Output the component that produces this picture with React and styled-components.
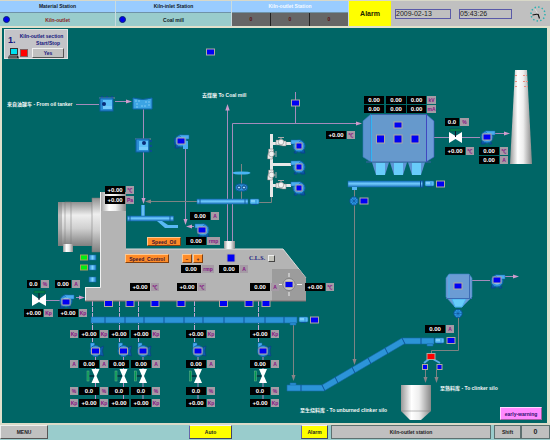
import React from "react";
import styled, { createGlobalStyle } from "styled-components";

const sans = '"Liberation Sans", "Noto Sans CJK SC", sans-serif';

const GlobalStyle = createGlobalStyle`
  *, *::before, *::after { box-sizing: border-box; }
  body { margin: 0; background: #d8d8c8; font: bold 5px/8px ${sans}; }
  button, input { font: inherit; margin: 0; padding: 0; }
`;

/* The canvas starts 28px down; all plant coordinates count from the header's top. */
const TOP = 28;

const Page = styled.div`
  display: flex;
  flex-direction: column;
  min-height: 100vh;
`;

const Header = styled.header`
  display: grid;
  grid-template-columns: 116fr 116fr 117fr 42fr 159fr;
  height: 28px;
  padding-top: 1px;
  border-bottom: 2px solid #e0e0cc;
`;

const Station = styled.section`
  display: grid;
  grid-template-rows: 12px 13px;
  border-right: 1px solid #c8dce0;
`;

const StationTitle = styled.h2`
  margin: 0;
  font: inherit;
  line-height: 11px;
  text-align: center;
  background: #99ccff;
  border-bottom: 1px solid #6f93a8;
  color: ${(p) => (p.$active ? "#f4faff" : "#101828")};
`;

const StationPage = styled.button`
  display: grid;
  grid-template-columns: 12px 1fr 12px;
  align-items: center;
  border: 0;
  background: #99cccc;
  color: ${(p) => (p.$current ? "#8a1c24" : "#101828")};
`;

const Dot = styled.span`
  width: 7px;
  height: 7px;
  margin-left: 3px;
  border-radius: 50%;
  background: #0000f0;
  border: 1px solid #0a2a70;
`;

const Counters = styled.div`
  display: grid;
  grid-template-columns: repeat(3, 1fr);
  gap: 1px;
  background: #222;
`;

const Counter = styled.output`
  text-align: center;
  line-height: 13px;
  background: #666;
  color: #5c1010;
`;

const AlarmButton = styled.button`
  border: 0;
  background: #ffff00;
  color: #222200;
  font-size: 7px;
`;

const ClockBar = styled.div`
  display: flex;
  align-items: center;
  gap: 8px;
  padding: 0 4px;
  background: #c0c0c0;
  color: #222;
  font-size: 7px;
  font-weight: 400;
`;

const Stamp = styled.time`
  width: ${(p) => p.$w}px;
  height: 10px;
  line-height: 8px;
  border: 1px solid #5a5aa8;
`;

const DialFace = styled.svg`
  width: 16px;
  height: 16px;
  margin-left: auto;
`;

const Canvas = styled.main`
  position: relative;
  flex: 1;
  min-height: 395px;
  overflow: hidden;
  background: #006666;
  border-left: 2px solid #e0e0cc;
  border-right: 3px solid #e0e0cc;
`;

const Stage = styled.div`
  position: absolute;
  top: 0;
  left: -2px;
  width: 550px;
  height: 395px;
`;

const Drawing = styled.svg`
  position: absolute;
  inset: 0;
  width: 550px;
  height: 395px;
`;

const Node = styled.div`
  position: absolute;
  left: ${(p) => p.$x}px;
  top: ${(p) => p.$y - TOP}px;
`;

const ReadingNode = styled(Node)`
  display: flex;
  flex-direction: ${(p) => (p.$flip ? "row-reverse" : "row")};
  gap: 1px;
  height: 8px;
`;

const Value = styled.output`
  width: ${(p) => p.$w}px;
  background: #000;
  color: #fff;
  font-size: 6px;
  text-align: center;
`;

const Unit = styled.span`
  width: ${(p) => p.$w}px;
  background: #a59ba5;
  color: #841284;
  text-align: center;
`;

const Caption = styled(Node)`
  color: #f2f7f7;
  white-space: nowrap;
`;

const OrangeButton = styled(Node).attrs({ as: "button" })`
  width: ${(p) => p.$w}px;
  height: 9px;
  line-height: 6px;
  background: #ff8c28;
  border: 1px solid;
  border-color: #ffc890 #804010 #804010 #ffc890;
  color: #401430;
`;

const WarningButton = styled(Node).attrs({ as: "button" })`
  width: 42px;
  height: 13px;
  background: #ff88ff;
  border: 1px solid;
  border-color: #ffd8ff #a060a0 #a060a0 #ffd8ff;
  color: #30106c;
`;

const SectionPanel = styled(Node)`
  display: grid;
  grid-template-columns: 11px 10px 1fr;
  grid-template-rows: 15px 10px;
  gap: 1px 0;
  align-items: center;
  width: 64px;
  height: 30px;
  padding: 2px 3px;
  background: #c4c4c8;
  border: 1px solid #e4e4e4;
  color: #14147c;
`;

const SectionNumber = styled.b`
  font-size: 9px;
`;

const SectionTitle = styled.h1`
  grid-column: 2 / 4;
  display: grid;
  justify-items: center;
  margin: 0;
  font: inherit;
  line-height: 7px;
  white-space: nowrap;
`;

const SectionAction = styled.span`
  justify-self: end;
  padding-right: 4px;
`;

const RedLamp = styled.span`
  justify-self: center;
  width: 8px;
  height: 8px;
  background: #f00;
  border: 1px solid #806060;
`;

const YesButton = styled.button`
  height: 10px;
  margin-left: 3px;
  line-height: 7px;
  background: #c0c0c0;
  border: 1px solid;
  border-color: #f0f0f0 #555 #555 #f0f0f0;
  color: #14147c;
`;

const CheckLabel = styled(Node).attrs({ as: "label" })`
  display: flex;
  align-items: center;
  gap: 3px;
  color: #202080;
  font-family: "Liberation Serif", serif;
  font-size: 6px;
`;

const Check = styled.input`
  appearance: none;
  width: 7px;
  height: 7px;
  background: #c4c4bc;
  border: 1px solid;
  border-color: #eee #444 #444 #eee;
`;

const Footer = styled.footer`
  display: grid;
  grid-template-columns: 48fr 141fr 43fr 69fr 27fr 3fr 160fr 3fr 27fr 29fr;
  height: 17px;
  padding-bottom: 2px;
  border-top: 2px solid #dadac8;
  background: #99cccc;
`;

const FooterButton = styled.button`
  grid-column: ${(p) => p.$col};
  background: ${(p) => (p.$yellow ? "#ffff00" : "#c0c0c0")};
  border: 1px solid;
  border-color: ${(p) => (p.$yellow ? "#eef #446 #446 #66a" : "#eee #555 #555 #eee")};
  color: #222;
`;

const FooterCell = styled.div`
  grid-column: ${(p) => p.$col};
  background: #c0c0c0;
  border: 1px solid #5d7070;
  color: #222;
  text-align: center;
  line-height: 12px;
  font-size: ${(p) => (p.$big ? 7 : 5)}px;
`;

/* x, y, value, unit, value width, unit width */
const readings = [
  [105, 186, "+0.00", "℃"], [105, 196, "+0.00", "Pa"],
  [326, 131, "+0.00", "℃"],
  [407, 96, "0.00", "kV", 19, 9], [407, 105, "0.00", "mA", 19, 9],
  [445, 118, "0.0", "%", 14, 9],
  [445, 147, "+0.00", "℃"], [479, 147, "0.00", "℃"], [479, 156, "0.00", "A"],
  [130, 283, "+0.00", "℃"], [177, 283, "+0.00", "℃"],
  [27, 280, "0.0", "%", 13], [55, 280, "0.00", "A", 16],
  [24, 309, "+0.00", "Kp", 19, 9], [58, 309, "+0.00", "Kp"],
  [190, 212, "0.00", "A"], [186, 237, "0.00", "rmp", 20, 13],
  [181, 265, "0.00", "rmp", 20, 12], [219, 265, "0.00", "A"],
  [250, 283, "0.00", "A"], [305, 283, "+0.00", "℃"],
  [425, 325, "0.00", "A"],
];

const tripleValues = [[364, 96], [386, 96], [364, 105], [386, 105]];

const fanColumns = [
  { x: 70, flip: true }, { x: 100, flip: true }, { x: 131 }, { x: 186 }, { x: 250 },
];
const fanRows = [
  [330, "+0.00", "Kp"], [360, "0.00", "A"], [387, "0.0", "%"], [399, "+0.00", "Kp"],
];

function Reading({ x, y, value, unit, w = 20, uw = 8, flip }) {
  return (
    <ReadingNode $x={x} $y={y} $flip={flip}>
      <Value $w={w}>{value}</Value>
      {unit && <Unit $w={uw}>{unit}</Unit>}
    </ReadingNode>
  );
}

function Lamp({ x, y, w = 8, h = 6, fill = "#0000f4" }) {
  return (
    <rect x={x - w / 2} y={y - h / 2} width={w} height={h} fill={fill} stroke="#b0a8a0" strokeWidth="1" />
  );
}

function Fan({ x, y, flip }) {
  return (
    <g transform={`translate(${x} ${y}) scale(${flip ? -1 : 1} 1)`}>
      <path d="M-5 4 L-6 7 H-2 L-1 4 M3 4 L5 7 H2" fill="#0a5aa8" stroke="#084488" strokeWidth="1" />
      <circle r="6" fill="#2f92dc" stroke="#0f60a8" strokeWidth="1" />
      <path d="M-2 -6 H8 V-2 H2 Z" fill="#48acf0" stroke="#1468b0" strokeWidth=".5" />
      <circle r="3.5" fill="#8ad0ff" />
    </g>
  );
}

function ColumnFan({ x }) {
  return (
    <g>
      <path d={`M${x} 356 V370 M${x} 382 V399`} stroke="#b890c8" />
      <g transform={`translate(${x} 351)`}>
        <path d="M4 -3 L8 -5 L7 0 L8 5 L4 4" fill="#0e5cac" stroke="#0a3c80" strokeWidth=".6" />
        <path d="M-5 -8 H-1 V-3 H-5 Z" fill="#48acf0" stroke="#1468b0" strokeWidth=".5" />
        <circle r="5.5" fill="#3496dc" stroke="#0f60a8" />
      </g>
      <path d={`M${x} 376 H${x - 7}`} stroke="#012" />
      <path d={`M${x - 4} 369 H${x + 4} L${x + 1} 376 L${x + 4} 383 H${x - 4} L${x - 1} 376 Z`} fill="#fff" />
      <rect x={x - 8.5} y="371" width="2" height="10" fill="#009850" stroke="#68b48c" strokeWidth=".5" />
    </g>
  );
}

function PipeValve({ x, y, vertical }) {
  return (
    <g transform={`translate(${x} ${y}) rotate(${vertical ? 90 : 0})`}>
      <path d="M-5 -2 H-2 L2 -1 H5 V4 H2 L-2 3 H-5 Z" fill="#ececec" stroke="#777" strokeWidth=".5" />
      <circle r="2.8" fill="#f2f2f2" stroke="#888" strokeWidth=".6" />
      <path d="M-3 -4.5 H3 M0 -4 V-2" stroke="#aaa" />
    </g>
  );
}

function Arrow({ x, y, turn = 0, fill = "#d09ccc", size = 1 }) {
  return <path transform={`translate(${x} ${y}) rotate(${turn}) scale(${size})`} d="M0 0 L-6 -2 V2 Z" fill={fill} />;
}

function OilPump({ x, y, side }) {
  return (
    <g transform={`translate(${x} ${y})`}>
      {side
        ? <path d="M15 1 V3 M15 6 V8 M15 11 V13" stroke="#0a4c90" strokeWidth="2" />
        : <path d="M1 -1 H3 M6 -1 H8 M11 -1 H13" stroke="#0a4c90" strokeWidth="2" />}
      <path d="M-1 0 H15" stroke="#8a8a9a" />
      <rect width="13" height="13" fill="#2b8cd4" stroke="#0d5ca4" />
      <rect x="3" y="2" width="9" height="9" fill="#5cc0f8" />
      <path d="M3 11 H12 V8 H3 Z" fill="#8ad8ff" opacity=".5" />
      <circle cx={side ? 8 : 4} cy={side ? 4 : 6} r="2" fill="#082c78" />
    </g>
  );
}

function Motor({ x, y }) {
  return (
    <g transform={`translate(${x} ${y})`}>
      <rect width="9" height="5" rx="1" fill="#58bcf4" stroke="#1468b0" strokeWidth=".6" />
      <path d="M2 5.5 H7" stroke="#0a5498" />
      <path d="M6 1 V5" stroke="#2080cc" strokeWidth=".6" />
      <path d="M1 2 H5" stroke="#a4e0ff" />
    </g>
  );
}

function Wheel({ x, y }) {
  return (
    <g transform={`translate(${x} ${y})`} stroke="#0a4c90" strokeWidth=".8">
      <circle r="4.2" fill="#2c98e4" />
      <path d="M-4 0 H4 M0 -4 V4 M-3 -3 L3 3 M-3 3 L3 -3" strokeWidth=".5" />
    </g>
  );
}

const stops = (list) => list.map(([o, c]) => <stop key={o} offset={o} stopColor={c} />);

function Plant() {
  const lamps = [
    [210.5, 52], [295.5, 103], [299, 146, 6, 6], [299, 167, 6, 6], [299, 188, 6, 6], [181, 141],
    [398, 125], [380.5, 139, 8, 8], [398, 139, 8, 8], [415, 139, 8, 8], [487, 137], [440.5, 184],
    [364, 201], [202, 230], [231, 258, 8, 8], [289, 284.5], [66, 302],
    [108.5, 303.5], [130, 303.5], [155, 303.5], [181, 303.5], [223.5, 303.5], [249, 303.5], [266, 303.5],
    [314.5, 320], [95.5, 351], [123.5, 351], [143, 351], [198, 351], [263, 351],
    [458, 286], [497, 280], [451, 340.5], [425, 367, 5, 5], [439.5, 367, 5, 5],
  ];
  return (
    <Drawing viewBox="0 28 550 395" aria-hidden="true">
      <defs>
        <linearGradient id="steelX">{stops([[0, "#999"], [0.35, "#fff"], [0.6, "#eee"], [1, "#888"]])}</linearGradient>
        <linearGradient id="steelY" x2="0" y2="1">{stops([[0, "#909090"], [0.3, "#eee"], [0.6, "#d0d0d0"], [1, "#808080"]])}</linearGradient>
        <linearGradient id="blueY" x2="0" y2="1">{stops([[0, "#1c7cc8"], [0.45, "#74ccff"], [1, "#1c74bc"]])}</linearGradient>
        <linearGradient id="blueX">{stops([[0, "#2080cc"], [0.5, "#7cd4ff"], [1, "#2080cc"]])}</linearGradient>
      </defs>

      {/* process lines */}
      <g fill="none" stroke="#a48cbc">
        <path d="M76 104.5 H99 M115 101.5 H128 M143.5 109 V202 M185.5 148 V222 M194 226.5 H188" />
        <path d="M227.5 110 V242 M232.5 242 V123.5 H358 M295.5 92 V123" />
        <path d="M434 137.5 H480 M495 133.5 H505 M46 300.5 H62 M76 297.5 H80" />
        <path d="M472 280.5 H490 M504 276.5 H515" />
      </g>
      <g fill="none" stroke="#c4a8d4" strokeDasharray="5 1">
        <path d="M92.5 301 V346 M119.500 301 V346 M138.500 301 V346 M194.500 301 V346 M258.500 301 V346" />
      </g>
      <g fill="none" stroke="#7d8484">
        <path d="M150 201.5 H197 M241.5 164 V199 M354.5 190 V360 M293.5 324 V376 M458.5 317 V350.5 H431.5 V354 M425.5 370 V378 M436.5 370 V378 M258 202.5 H271.5 V197" />
      </g>
      <Arrow x={132} y={101.5} />
      <Arrow x={143.5} y={204} turn={90} />
      <Arrow x={145} y={201.5} turn={180} fill="#8c8488" />
      <Arrow x={185.5} y={225} turn={90} />
      <Arrow x={186} y={226.5} turn={180} />
      <Arrow x={227.5} y={104} turn={-90} size={1.1} />
      <Arrow x={362} y={123.5} />
      <Arrow x={510} y={133.5} />
      <Arrow x={85} y={297.5} />
      <Arrow x={519} y={276.5} />
      <Arrow x={354.5} y={365} turn={90} fill="#8c8488" />
      <Arrow x={293.5} y={381} turn={90} fill="#8c8488" />
      <Arrow x={425.5} y={383} turn={90} fill="#8c8488" />
      <Arrow x={436.5} y={383} turn={90} fill="#8c8488" />

      {/* oil tanker line */}
      <OilPump x={100} y={98} />
      <path d="M133 98 Q143 101 152 98 V109 H133 Z" fill="#3ca4e4" stroke="#0e64ac" />
      <path d="M135 101 H141 M145 102 H150 M136 104 H139 M141 106 H147 M148 105 H151 M136 107 H138" stroke="#7cc8f4" strokeDasharray="2 1" />
      <OilPump x={136} y={139} side />
      <path d="M174 138 H178 V145 H174 Z" fill="#0a4c98" />
      <Fan x={181} y={141} />
      <path d="M183 141 H188 V149 H183 Z" fill="#48acf0" />
      <Fan x={203} y={230} flip />
      <rect x="141" y="205" width="4" height="12" fill="url(#blueX)" />
      <rect x="127.5" y="216" width="46" height="5" fill="url(#blueY)" stroke="#1468b0" strokeWidth=".5" />
      <path d="M130 216 V221 M170 216 V221" stroke="#0e5ca0" />
      <path d="M157 221 H162 L168 225 H178 V228 H165 Z" fill="#58b8f4" />

      {/* coal conveyor */}
      <ellipse cx="241.5" cy="173" rx="9" ry="1.6" fill="#48b4f4" />
      <rect x="235.5" y="184" width="12" height="7" rx="3.5" fill="#2c90d8" stroke="#0c5898" />
      <circle cx="239" cy="187.5" r="1.6" fill="#a4e0ff" stroke="#083c78" />
      <circle cx="244" cy="187.5" r="1.6" fill="#a4e0ff" stroke="#083c78" />
      <rect x="197" y="199" width="51" height="5" fill="url(#blueY)" stroke="#1468b0" strokeWidth=".5" />
      <path d="M200 199 V204 M245 199 V204" stroke="#0e5ca0" />
      <Motor x={250} y={199} />

      {/* pump manifold */}
      <rect x="270" y="134" width="3" height="63" fill="#e8e8e8" />
      <rect x="272" y="142" width="19" height="3" fill="#e8e8e8" />
      <rect x="272" y="163" width="19" height="3" fill="#e8e8e8" />
      <rect x="272" y="184" width="19" height="3" fill="#e8e8e8" />
      <PipeValve x={281} y={142} />
      <PipeValve x={281} y={185} />
      <PipeValve x={271.5} y={154} vertical />
      <PipeValve x={271.5} y={175} vertical />
      <Fan x={299} y={146} flip />
      <Fan x={299} y={167} flip />
      <Fan x={299} y={188} flip />

      {/* dust filter and stack */}
      <path d="M363 121 L371 114 V162 L363 157 Z" fill="#5c94d0" stroke="#3878bc" strokeWidth=".6" />
      <path d="M426 114 L434 121 V157 L426 162 Z" fill="#6c9cd8" stroke="#3c54b8" strokeWidth=".6" />
      <rect x="371" y="114" width="55" height="48" fill="#6699cc" />
      <path d="M371.5 114 V162" stroke="#30b4f4" />
      <path d="M426.5 114 V162" stroke="#4048c0" />
      <path d="M371 114.5 H426 M366 162 H431" stroke="#3c60a8" />
      {[372, 390, 408].map((x) => (
        <g key={x}>
          <path d={`M${x} 162.5 H${x + 17} L${x + 13} 175 H${x + 4} Z`} fill="#5c94d4" />
          <path d={`M${x + 4} 163 H${x + 13} V175 H${x + 4} Z`} fill="#68ccfa" />
        </g>
      ))}
      <path d="M515 70 H527 L532 164 H510 Z" fill="url(#steelX)" />
      <path d="M515 75.5 H518 M523 75.5 H527 M515 81.5 H518 M523 81.5 H528 M515 86.5 H517 M524 86.5 H528" stroke="#ec8c80" strokeDasharray="2 1" />
      <rect x="348" y="181" width="75" height="6" fill="url(#blueY)" stroke="#1468b0" strokeWidth=".5" />
      <path d="M352 187 H357 V190 H352 Z" fill="#58b8f4" />
      <path d="M420.5 180 V188 M423 180 V188" stroke="#0a4c90" />
      <Motor x={425} y={181} />
      <Wheel x={354} y={201} />
      <path d="M449 132 V143 L455.5 139 L462 143 V132 L455.5 136 Z" fill="#fff" />
      <path d="M455.5 137 V131" stroke="#112" />
      <rect x="450" y="129" width="11" height="2" fill="#008850" stroke="#004c30" strokeWidth=".5" />
      <Fan x={487} y={137} />

      {/* kiln and cooler */}
      <rect x="58" y="202" width="36" height="44" fill="url(#steelY)" />
      <rect x="58" y="202" width="4" height="44" fill="#777" opacity=".4" />
      <rect x="65" y="202" width="6" height="44" fill="url(#steelY)" stroke="#777" strokeWidth=".5" />
      <rect x="63" y="244" width="10" height="8" fill="url(#steelX)" />
      <rect x="92" y="198" width="9" height="54" fill="url(#steelY)" stroke="#777" strokeWidth=".5" />
      <path d="M100 192 H126 V249 H283 L306 278 V301 H85 V287 H100 Z" fill="#b4b4b4" />
      <path d="M100 192 H126 V211 H100 Z" fill="url(#steelX)" />
      <path d="M126 249 H283 L306 278" fill="none" stroke="#dcdcdc" strokeWidth="1" />
      <path d="M85.5 301 V287.5 H100.5 V192" fill="none" stroke="#f0f0f0" />
      <path d="M272 269 H299 L306 278 V301 H272 Z" fill="#9c9c9c" />
      <path d="M85 301 H306" stroke="#846c70" />
      <circle cx="289" cy="284.5" r="6" fill="#c8c8c8" stroke="#666" strokeWidth=".6" />
      <path d="M289 273 V277 M289 292 V296 M278 284.5 H282 M297 284.5 H302" stroke="#eee" strokeWidth="1" />
      <rect x="224" y="241" width="11" height="8" fill="url(#steelX)" />
      {[258, 268].map((y) => (
        <rect key={y} x="80.5" y={y - 3} width="7" height="5" fill="#00ee10" stroke="#a8a060" />
      ))}
      {[258, 268, 280].map((y) => (
        <rect key={y} x="89" y={y - 3} width="7" height="5" fill="url(#blueX)" stroke="#1468b0" strokeWidth=".5" />
      ))}
      <path d="M32 294 V306 L39 302 L46 306 V294 L39 299 Z" fill="#fff" />
      <path d="M39 300 V293" stroke="#112" />
      <rect x="34" y="291" width="11" height="2" fill="#008850" stroke="#004c30" strokeWidth=".5" />
      <Fan x={66} y={301} />

      {/* clinker drag chain */}
      <g fill="#2c94d8" stroke="#1468a8" strokeWidth=".6">
        <path d="M91 317 H297 V323 H91 Z" />
        <path d="M290 323 H296 V325 H290 Z M290 383 H296 V386 H290 Z" />
        <path d="M287 385 H322 L402 338 H434 V344 H404 L324 391 H287 Z" />
        <path d="M427 344 H433 V346 H427 Z" />
      </g>
      <path d="M105 317 V323 M125 317 V323 M144 317 V323 M164 317 V323 M184 317 V323 M203 317 V323 M224 317 V323 M244 317 V323 M265 317 V323 M284 317 V323 M301 385 V391 M322 385 L325 391 M335 377 L338 383 M352 367 L355 373 M368 358 L371 364 M385 348 L388 354 M402 338 L405 344 M421 338 V344" stroke="#0c5498" />
      <Motor x={299} y={317} />
      <Motor x={435} y={338} />
      {[95.5, 123.5, 143, 198, 263].map((x) => <ColumnFan key={x} x={x} />)}

      {/* clinker silo */}
      <path d="M449 274 H469 L472 278 V297 L462 307 H455 L446 297 V278 Z" fill="#6c9cd4" stroke="#3c84c8" strokeWidth=".6" />
      <path d="M449 275 V298 M452 299 H466 L462 307 H455 Z" fill="#68ccfa" stroke="#48b0f0" />
      <path d="M469.5 275 V298 M446 298.5 H472" stroke="#3c6cb4" />
      <Wheel x={458} y={313.5} />
      <Fan x={497} y={281} />
      <path d="M429 359 L424 363 M433 359 L440 363" stroke="#5caae8" strokeWidth="2" />
      <path d="M401 385 H431 V411 L421 420 H410 L401 411 Z" fill="url(#steelX)" />
      <path d="M401 411 H431" stroke="#777" strokeWidth=".5" />

      {lamps.map(([x, y, w, h]) => <Lamp key={`${x}-${y}`} x={x} y={y} w={w} h={h} />)}
      <Lamp x={431} y={356.5} fill="#f00" />
    </Drawing>
  );
}

function Computer() {
  return (
    <svg width="11" height="11" viewBox="0 0 11 11" aria-hidden="true">
      <rect x="2.5" y=".5" width="7" height="6" fill="#00e0f0" stroke="#333" />
      <path d="M1 7.5 H10 L11 10.5 H0 Z" fill="#222" />
      <path d="M1 9 H9" stroke="#ccc" strokeWidth=".7" />
    </svg>
  );
}

function Dial() {
  return (
    <DialFace viewBox="0 0 16 16" aria-hidden="true">
      <circle cx="8" cy="8" r="7" fill="none" stroke="#28b0b0" strokeWidth="1.5" strokeDasharray="1.4 2.26" />
      <path d="M8 8 L9.5 12.5 M8 8 L2.5 9" stroke="#111" strokeWidth="1.2" />
      <path d="M8 8 L5 3" stroke="#eee" strokeWidth=".6" />
    </DialFace>
  );
}

export default function App() {
  return (
    <Page>
      <GlobalStyle />
      <Header>
        <Station>
          <StationTitle>Material Station</StationTitle>
          <StationPage $current><Dot />Kiln-outlet</StationPage>
        </Station>
        <Station>
          <StationTitle>Kiln-inlet Station</StationTitle>
          <StationPage><Dot />Coal mill</StationPage>
        </Station>
        <Station>
          <StationTitle $active>Kiln-outlet Station</StationTitle>
          <Counters><Counter>0</Counter><Counter>0</Counter><Counter>0</Counter></Counters>
        </Station>
        <AlarmButton>Alarm</AlarmButton>
        <ClockBar>
          <Stamp $w={56}>2009-02-13</Stamp>
          <Stamp $w={53}>05:43:26</Stamp>
          <Dial />
        </ClockBar>
      </Header>

      <Canvas>
        <Stage>
          <Plant />
          <SectionPanel $x={4} $y={29}>
            <SectionNumber>1.</SectionNumber>
            <SectionTitle>
              <span>Kiln-outlet section</span>
              <SectionAction>Start/Stop</SectionAction>
            </SectionTitle>
            <Computer />
            <RedLamp />
            <YesButton>Yes</YesButton>
          </SectionPanel>

          <Caption $x={7} $y={100}>来自油罐车 - From oil tanker</Caption>
          <Caption $x={202} $y={91}>去煤磨 To Coal mill</Caption>
          <Caption $x={440} $y={384}>至熟料库 - To clinker silo</Caption>
          <Caption $x={300} $y={406}>至生烧料库 - To unburned clinker silo</Caption>

          {readings.map(([x, y, value, unit, w, uw]) => (
            <Reading key={`${x}-${y}`} x={x} y={y} value={value} unit={unit} w={w} uw={uw} />
          ))}
          {tripleValues.map(([x, y]) => <Reading key={`${x}-${y}`} x={x} y={y} value="0.00" />)}
          {fanColumns.map(({ x, flip }) =>
            fanRows.map(([y, value, unit]) => (
              <Reading key={`${x}-${y}`} x={x} y={y} value={value} unit={unit} flip={flip} />
            ))
          )}

          <OrangeButton $x={147} $y={237} $w={34}>Speed_Oil</OrangeButton>
          <OrangeButton $x={125} $y={254} $w={44}>Speed_Control</OrangeButton>
          <OrangeButton $x={182} $y={254} $w={10}>−</OrangeButton>
          <OrangeButton $x={193} $y={254} $w={10}>+</OrangeButton>
          <CheckLabel $x={249} $y={254}>C.L.S.<Check type="checkbox" /></CheckLabel>
          <WarningButton $x={500} $y={407}>early-warning</WarningButton>
        </Stage>
      </Canvas>

      <Footer>
        <FooterButton $col={1}>MENU</FooterButton>
        <FooterButton $col={3} $yellow>Auto</FooterButton>
        <FooterButton $col={5} $yellow>Alarm</FooterButton>
        <FooterCell $col={7}>Kiln-outlet station</FooterCell>
        <FooterCell $col={9}>Shift</FooterCell>
        <FooterCell $col={10} $big>0</FooterCell>
      </Footer>
    </Page>
  );
}
